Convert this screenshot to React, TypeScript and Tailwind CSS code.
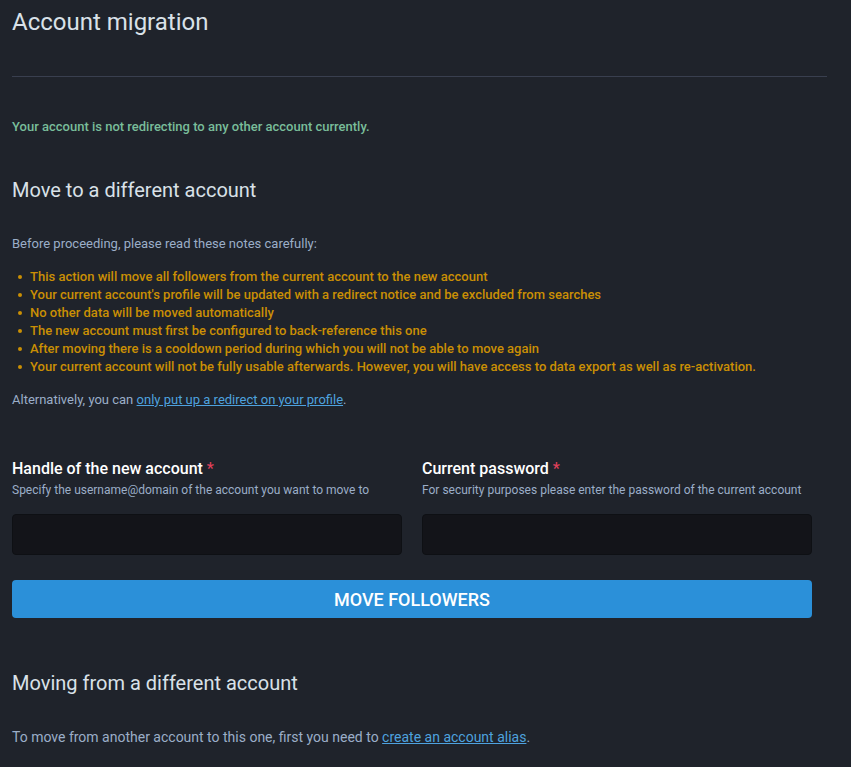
import React from "react";

const notes = [
  "This action will move all followers from the current account to the new account",
  "Your current account's profile will be updated with a redirect notice and be excluded from searches",
  "No other data will be moved automatically",
  "The new account must first be configured to back-reference this one",
  "After moving there is a cooldown period during which you will not be able to move again",
  "Your current account will not be fully usable afterwards. However, you will have access to data export as well as re-activation.",
];

function Field({ label, hint, type }: { label: string; hint: string; type: string }) {
  return (
    <div className="flex flex-col">
      <label className="text-[16px] font-medium leading-[20px] text-white">
        {label} <span className="text-[#df405a]">*</span>
      </label>
      <p className="mt-[3px] text-[12px] leading-[16px] text-[#9baec8]">{hint}</p>
      <input
        type={type}
        className="mt-[16px] h-[41px] w-full rounded-[4px] border border-[#0e1014] bg-[#131419] px-3 text-white outline-none"
      />
    </div>
  );
}

export default function App() {
  return (
    <div
      className="min-h-screen bg-[#1f232b] px-3 text-[#9baec8]"
      style={{ fontFamily: "Roboto, 'Liberation Sans', sans-serif" }}
    >
      <div className="w-[815px]">
        <h1 className="pt-[7px] text-[24px] font-normal leading-[30px] text-[#d9e1e8]">Account migration</h1>
        <hr className="mt-[39px] border-0 border-t border-[#393f4f]" />

        <p className="mt-[41px] text-[13px] font-medium leading-[18px] text-[#79bd9a]">
          Your account is not redirecting to any other account currently.
        </p>

        <h2 className="mt-[41px] text-[20px] font-normal leading-[26px] text-[#d9e1e8]">
          Move to a different account
        </h2>

        <p className="mt-[32px] text-[13px] leading-[18px]">Before proceeding, please read these notes carefully:</p>

        <ul className="mt-[15px] flex flex-col">
          {notes.map((n) => (
            <li key={n} className="flex items-center text-[13px] font-medium leading-[18px] text-[#ca8f04]">
              <span className="ml-[6px] mr-[8px] h-[4px] w-[4px] rounded-full bg-[#ca8f04]" />
              {n}
            </li>
          ))}
        </ul>

        <p className="mt-[15px] text-[13px] leading-[18px]">
          Alternatively, you can{" "}
          <a href="#" className="text-[#4ea2df] underline">
            only put up a redirect on your profile
          </a>
          .
        </p>

        <div className="mt-[50px] grid w-[800px] grid-cols-2 gap-x-[20px]">
          <Field
            label="Handle of the new account"
            hint="Specify the username@domain of the account you want to move to"
            type="text"
          />
          <Field
            label="Current password"
            hint="For security purposes please enter the password of the current account"
            type="password"
          />
        </div>

        <button className="mt-[25px] h-[38px] w-[800px] rounded-[4px] bg-[#2b90d9] text-[18px] font-medium uppercase text-white">
          Move followers
        </button>

        <h2 className="mt-[52px] text-[20px] font-normal leading-[26px] text-[#d9e1e8]">
          Moving from a different account
        </h2>

        <p className="mt-[31px] pb-[20px] text-[14px] leading-[20px]">
          To move from another account to this one, first you need to{" "}
          <a href="#" className="text-[#4ea2df] underline">
            create an account alias
          </a>
          .
        </p>
      </div>
    </div>
  );
}
